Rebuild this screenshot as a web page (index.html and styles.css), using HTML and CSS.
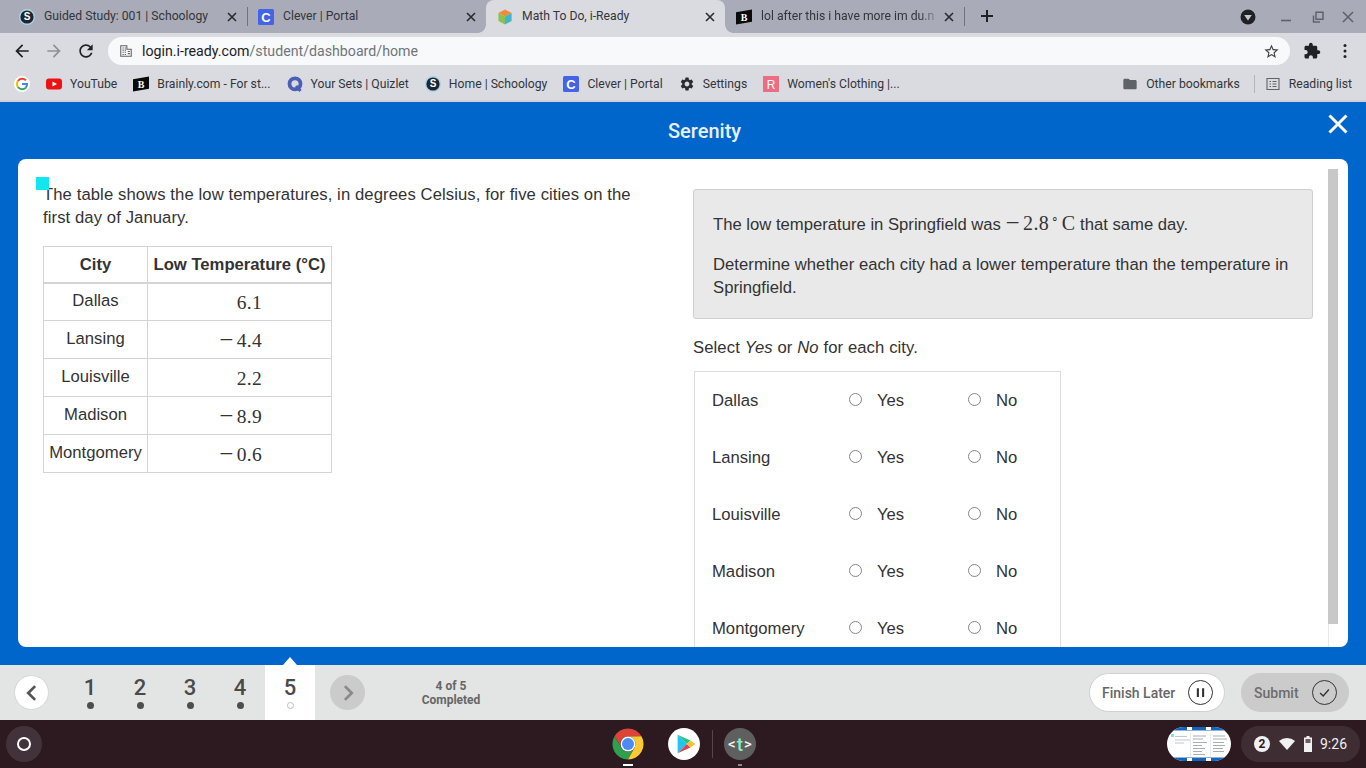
FILE: index.html
```html
<!DOCTYPE html>
<html lang="en">
<head>
<meta charset="utf-8">
<title>Math To Do, i-Ready</title>
<link rel="stylesheet" href="styles.css">
</head>
<body>
<header class="tabstrip">
  <div class="tab">
    <svg class="fav" viewBox="0 0 16 16"><circle cx="8" cy="8" r="8" fill="#a9d3e4"/><circle cx="8" cy="8" r="6.600" fill="#1c2530"/><text x="8" y="11.400" text-anchor="middle" class="glyph-s">S</text></svg>
    <span class="tab-title">Guided Study: 001 | Schoology</span>
    <svg class="tab-x" viewBox="0 0 16 16"><path d="M4 4l8 8M12 4l-8 8"/></svg>
    <i class="tab-sep"></i>
  </div>
  <div class="tab">
    <svg class="fav" viewBox="0 0 16 16"><rect width="16" height="16" rx="1.500" fill="#4563e6"/><text x="8" y="12.700" text-anchor="middle" class="glyph-c">C</text></svg>
    <span class="tab-title">Clever | Portal</span>
    <svg class="tab-x" viewBox="0 0 16 16"><path d="M4 4l8 8M12 4l-8 8"/></svg>
  </div>
  <div class="tab tab-active">
    <svg class="fav" viewBox="0 0 16 16">
      <path d="M8 .5l6.600 3.500L8 7.600 1.400 4z" fill="#f08c38"/>
      <path d="M1.400 4L8 7.600v8L1.400 12z" fill="#8cc152"/>
      <path d="M14.600 4L8 7.600v8l6.600-3.600z" fill="#3fb6c9"/>
    </svg>
    <span class="tab-title">Math To Do, i-Ready</span>
    <svg class="tab-x" viewBox="0 0 16 16"><path d="M4 4l8 8M12 4l-8 8"/></svg>
  </div>
  <div class="tab">
    <svg class="fav" viewBox="0 0 16 16"><path d="M0 3.200L16 .5v12.300L0 15.500z" fill="#0a0a0a"/><text x="8" y="11.800" text-anchor="middle" class="glyph-b">B</text></svg>
    <span class="tab-title tab-fade">lol after this i have more im du.n</span>
    <svg class="tab-x" viewBox="0 0 16 16"><path d="M4 4l8 8M12 4l-8 8"/></svg>
    <i class="tab-sep"></i>
  </div>
  <svg class="newtab" viewBox="0 0 16 16"><path d="M8 2v12M2 8h12" fill="none" stroke="#202124" stroke-width="2"/></svg>
  <div class="win-controls">
    <svg class="profile" viewBox="0 0 16 16"><circle cx="8" cy="8" r="7.500" fill="#202124"/><path d="M4.200 6h7.600L8 11.400z" fill="#c5c7cf"/></svg>
    <svg class="win-btn" viewBox="0 0 16 16"><path d="M3 11.500h10" stroke="#5f6368" stroke-width="1.600" fill="none"/></svg>
    <svg class="win-btn" viewBox="0 0 16 16"><path d="M3.500 6.500v6.500h6.500M6 3.200h7v7H6z" stroke="#5f6368" stroke-width="1.500" fill="none"/></svg>
    <svg class="win-btn win-btn-last" viewBox="0 0 16 16"><path d="M3 3l10 10M13 3L3 13" stroke="#5f6368" stroke-width="1.600" fill="none"/></svg>
  </div>
</header>

<nav class="toolbar">
  <svg class="tool" viewBox="0 0 24 24"><path fill="#202124" d="M20 11H7.830l5.590-5.590L12 4l-8 8 8 8 1.410-1.410L7.830 13H20v-2z"/></svg>
  <svg class="tool" viewBox="0 0 24 24"><path fill="#8f9196" d="M4 11h12.170l-5.590-5.590L12 4l8 8-8 8-1.410-1.410L16.170 13H4v-2z"/></svg>
  <svg class="tool" viewBox="0 0 24 24"><path fill="#202124" d="M17.650 6.350C16.200 4.900 14.210 4 12 4c-4.420 0-7.990 3.580-7.990 8s3.570 8 7.990 8c3.730 0 6.840-2.550 7.730-6h-2.080c-.82 2.330-3.040 4-5.650 4-3.310 0-6-2.690-6-6s2.690-6 6-6c1.660 0 3.140.69 4.220 1.780L13 11h7V4l-2.350 2.350z"/></svg>
  <div class="omnibox">
    <svg class="site-icon" viewBox="0 0 16 16"><path d="M2 2h7v4h5v8H2z M4 4.500h1.500M6.500 4.500H8M4 7h1.500M6.500 7H8M4 9.500h1.500M6.500 9.500H8M10 8.500h2.500M10 11h2.500M4 12h1.500M6.500 12H8" fill="none" stroke="#5f6368" stroke-width="1.200"/></svg>
    <span class="url"><span class="url-host">login.i-ready.com</span>/student/dashboard/home</span>
    <svg class="star" viewBox="0 0 24 24"><path fill="#444" d="M22 9.240l-7.190-.62L12 2 9.190 8.630 2 9.240l5.460 4.730L5.820 21 12 17.270 18.180 21l-1.630-7.030L22 9.240zM12 15.400l-3.760 2.270 1-4.280-3.320-2.880 4.380-.38L12 6.100l1.710 4.040 4.380.38-3.320 2.880 1 4.280L12 15.400z"/></svg>
  </div>
  <svg class="ext" viewBox="0 0 24 24"><path fill="#202124" d="M20.500 11H19V7c0-1.100-.9-2-2-2h-4V3.500C13 2.120 11.880 1 10.500 1S8 2.120 8 3.500V5H4c-1.100 0-1.990.9-1.990 2v3.800H3.500c1.490 0 2.700 1.210 2.700 2.700s-1.210 2.700-2.700 2.700H2V20c0 1.100.9 2 2 2h3.800v-1.500c0-1.490 1.210-2.700 2.700-2.700 1.490 0 2.700 1.210 2.700 2.700V22H17c1.100 0 2-.9 2-2v-4h1.500c1.380 0 2.500-1.120 2.500-2.500S21.880 11 20.500 11z"/></svg>
  <svg class="menu" viewBox="0 0 16 16"><circle cx="8" cy="2.500" r="1.500" fill="#202124"/><circle cx="8" cy="8" r="1.500" fill="#202124"/><circle cx="8" cy="13.500" r="1.500" fill="#202124"/></svg>
</nav>

<nav class="bookmarks">
  <div class="bm">
    <svg class="fav" viewBox="0 0 16 16">
      <circle cx="8" cy="8" r="8" fill="#fff"/>
      <path d="M12 4.400A5.200 5.200 0 0 0 3.900 5" fill="none" stroke="#ea4335" stroke-width="2"/>
      <path d="M3.900 5a5.200 5.200 0 0 0 0 6" fill="none" stroke="#fbbc05" stroke-width="2"/>
      <path d="M3.900 11a5.200 5.200 0 0 0 8 .6" fill="none" stroke="#34a853" stroke-width="2"/>
      <path d="M8 8h5a5.200 5.200 0 0 1-1.200 3.700" fill="none" stroke="#4285f4" stroke-width="2"/>
    </svg>
  </div>
  <div class="bm">
    <svg class="fav" viewBox="0 0 16 16"><rect y="2.500" width="16" height="11" rx="3" fill="#ee1111"/><path d="M6.500 5.500v5L11 8z" fill="#fff"/></svg>
    <span>YouTube</span>
  </div>
  <div class="bm"><svg class="fav" viewBox="0 0 16 16"><path d="M0 3.200L16 .5v12.300L0 15.500z" fill="#0a0a0a"/><text x="8" y="11.800" text-anchor="middle" class="glyph-b">B</text></svg><span>Brainly.com - For st...</span></div>
  <div class="bm">
    <svg class="fav" viewBox="0 0 16 16"><circle cx="8" cy="7.800" r="5.500" fill="none" stroke="#4a5fb5" stroke-width="3.800"/><path d="M9 10l4.500 5" stroke="#4a5fb5" stroke-width="3"/></svg>
    <span>Your Sets | Quizlet</span>
  </div>
  <div class="bm"><svg class="fav" viewBox="0 0 16 16"><circle cx="8" cy="8" r="8" fill="#a9d3e4"/><circle cx="8" cy="8" r="6.600" fill="#1c2530"/><text x="8" y="11.400" text-anchor="middle" class="glyph-s">S</text></svg><span>Home | Schoology</span></div>
  <div class="bm"><svg class="fav" viewBox="0 0 16 16"><rect width="16" height="16" rx="1.500" fill="#4563e6"/><text x="8" y="12.700" text-anchor="middle" class="glyph-c">C</text></svg><span>Clever | Portal</span></div>
  <div class="bm"><svg class="fav gear" viewBox="0 0 24 24"><path fill="currentColor" d="M19.140 12.940c.04-.3.06-.61.06-.94 0-.32-.02-.64-.07-.94l2.030-1.580c.18-.14.23-.41.12-.61l-1.920-3.320c-.12-.22-.37-.29-.59-.22l-2.390.96c-.5-.38-1.030-.7-1.620-.94l-.36-2.540c-.04-.24-.24-.41-.48-.41h-3.840c-.24 0-.43.17-.47.41l-.36 2.540c-.59.24-1.130.57-1.620.94l-2.390-.96c-.22-.08-.47 0-.59.22L2.740 8.870c-.12.21-.08.47.12.61l2.030 1.580c-.05.3-.09.63-.09.94s.02.64.07.94l-2.030 1.580c-.18.14-.23.41-.12.61l1.920 3.320c.12.22.37.29.59.22l2.390-.96c.5.38 1.030.7 1.620.94l.36 2.54c.05.24.24.41.48.41h3.840c.24 0 .44-.17.47-.41l.36-2.54c.59-.24 1.130-.56 1.620-.94l2.390.96c.22.08.47 0 .59-.22l1.920-3.320c.12-.22.07-.47-.12-.61l-2.010-1.580zM12 15.600c-1.980 0-3.600-1.620-3.600-3.600s1.620-3.600 3.600-3.600 3.600 1.620 3.600 3.600-1.620 3.600-3.600 3.600z"/></svg><span>Settings</span></div>
  <div class="bm">
    <svg class="fav" viewBox="0 0 16 16"><rect width="16" height="16" fill="#ea6d84"/><text x="8" y="12.500" text-anchor="middle" class="glyph-r">R</text></svg>
    <span>Women's Clothing |...</span>
  </div>
  <div class="bm bm-right">
    <svg class="fav" viewBox="0 0 24 24"><path fill="#5f6368" d="M10 4H4c-1.100 0-1.990.9-1.990 2L2 18c0 1.100.9 2 2 2h16c1.100 0 2-.9 2-2V8c0-1.100-.9-2-2-2h-8l-2-2z"/></svg>
    <span>Other bookmarks</span>
  </div>
  <i class="bm-sep"></i>
  <div class="bm">
    <svg class="fav" viewBox="0 0 16 16"><path d="M2 2.500h12v11H2zM4.500 5.500h1.500M7.500 5.500h4M4.500 8h1.500M7.500 8h4M4.500 10.500h1.500M7.500 10.500h4" fill="none" stroke="#5f6368" stroke-width="1.100"/></svg>
    <span>Reading list</span>
  </div>
</nav>

<main class="stage">
  <div class="stage-head">
    <h1 class="student">Serenity</h1>
    <svg class="stage-close" viewBox="0 0 20 20"><path d="M1.500 1.500l17 17M18.500 1.500l-17 17" fill="none" stroke="#fff" stroke-width="3"/></svg>
  </div>
  <section class="card">
    <div class="pane">
      <div class="col-left">
        <i class="marker"></i>
        <p class="para para-intro">The table shows the low temperatures, in degrees Celsius, for five cities on the first day of January.</p>
        <table class="data">
          <thead><tr><th class="c-city">City</th><th class="c-temp">Low Temperature (°C)</th></tr></thead>
          <tbody>
            <tr><td>Dallas</td><td class="num">6.1</td></tr>
            <tr><td>Lansing</td><td class="num"><span class="minus">−</span>4.4</td></tr>
            <tr><td>Louisville</td><td class="num">2.2</td></tr>
            <tr><td>Madison</td><td class="num"><span class="minus">−</span>8.9</td></tr>
            <tr><td>Montgomery</td><td class="num"><span class="minus">−</span>0.6</td></tr>
          </tbody>
        </table>
      </div>
      <div class="col-right">
        <div class="prompt">
          <p class="para">The low temperature in Springfield was <span class="math"><span class="minus">−</span>2.8<sup class="deg">∘</sup>C</span> that same day.</p>
          <p class="para para-gap">Determine whether each city had a lower temperature than the temperature in Springfield.</p>
        </div>
        <p class="para select">Select <em>Yes</em> or <em>No</em> for each city.</p>
        <div class="choices">
          <div class="choice"><span>Dallas</span><label class="opt"><input type="radio" name="r1">Yes</label><label class="opt"><input type="radio" name="r1">No</label></div>
          <div class="choice"><span>Lansing</span><label class="opt"><input type="radio" name="r2">Yes</label><label class="opt"><input type="radio" name="r2">No</label></div>
          <div class="choice"><span>Louisville</span><label class="opt"><input type="radio" name="r3">Yes</label><label class="opt"><input type="radio" name="r3">No</label></div>
          <div class="choice"><span>Madison</span><label class="opt"><input type="radio" name="r4">Yes</label><label class="opt"><input type="radio" name="r4">No</label></div>
          <div class="choice"><span>Montgomery</span><label class="opt"><input type="radio" name="r5">Yes</label><label class="opt"><input type="radio" name="r5">No</label></div>
        </div>
      </div>
    </div>
    <div class="scroll"><div class="thumb"></div></div>
  </section>
</main>

<footer class="quizbar">
  <div class="round round-back"><svg viewBox="0 0 16 16"><path d="M10.500 2.500L5 8l5.500 5.500" fill="none" stroke="#555" stroke-width="2.200"/></svg></div>
  <div class="steps">
    <div class="step"><b>1</b><i class="dot"></i></div>
    <div class="step"><b>2</b><i class="dot"></i></div>
    <div class="step"><b>3</b><i class="dot"></i></div>
    <div class="step"><b>4</b><i class="dot"></i></div>
    <div class="step step-current"><b>5</b><i class="dot dot-open"></i></div>
  </div>
  <div class="round round-next"><svg viewBox="0 0 16 16"><path d="M5.500 2.500L11 8l-5.500 5.500" fill="none" stroke="#8a8a8a" stroke-width="2.200"/></svg></div>
  <div class="progress">4 of 5<br>Completed</div>
  <div class="pill pill-later">Finish Later<span class="pill-icon"><svg viewBox="0 0 24 24"><path d="M9 7v10M15 7v10" stroke="#333" stroke-width="2.400" fill="none"/></svg></span></div>
  <div class="pill pill-submit">Submit<span class="pill-icon"><svg viewBox="0 0 24 24"><path d="M7 12.500l3.500 3.500L17 8.500" stroke="#333" stroke-width="1.600" fill="none"/></svg></span></div>
</footer>

<footer class="shelf">
  <div class="launcher"><i class="ring"></i></div>
  <div class="apps">
    <div class="app">
      <svg class="app-icon" viewBox="0 0 48 48">
        <path d="M43.050 13A22 22 0 0 0 4.950 13L14.500 29A10.500 10.500 0 0 1 24 13.500Z" fill="#db4437"/>
        <path d="M4.950 13A22 22 0 0 0 24 46L33.500 28.500A10.500 10.500 0 0 1 14.500 29Z" fill="#2f9e4f"/>
        <path d="M24 46A22 22 0 0 0 43.050 13L24 13.500A10.500 10.500 0 0 1 33.500 28.500Z" fill="#fcc934"/>
        <circle cx="24" cy="24" r="10.500" fill="#fff"/><circle cx="24" cy="24" r="8.500" fill="#4c8bf5"/>
      </svg>
      <i class="run run-wide"></i>
    </div>
    <div class="app">
      <svg class="app-icon" viewBox="0 0 48 48">
        <circle cx="24" cy="24" r="22.500" fill="#fff"/>
        <path d="M15 11v26l13-13z" fill="#22c5f0"/>
        <path d="M15 11l13 13 5-5z" fill="#27c28a"/>
        <path d="M15 37l13-13 5 5z" fill="#e2404f"/>
        <path d="M33 19l-5 5 5 5 7-5z" fill="#fbc02d"/>
      </svg>
    </div>
    <i class="app-sep"></i>
    <div class="app">
      <div class="app-t"><span>&lt;</span><b>t</b><span>&gt;</span></div>
      <i class="run"></i>
    </div>
  </div>
  <svg class="windows" viewBox="0 0 64 34">
    <defs><clipPath id="pill-clip"><rect width="64" height="34" rx="17"/></clipPath></defs>
    <g clip-path="url(#pill-clip)">
      <rect width="64" height="34" fill="#fff"/>
      <path d="M6 1.500h14M25 1.500h14M44 1.500h14M6 32.500h14M25 32.500h14M44 32.500h14" stroke="#1466bd" stroke-width="3"/>
      <path d="M0 3.500h64M0 30.500h64" stroke="#8fb4dc" stroke-width="1"/>
      <rect x="4" y="7" width="3" height="3" fill="#7fe3ea"/>
      <path d="M8 9.500h12M8 13h15M8 16h9" stroke="#b4b8bd" stroke-width=".8"/>
      <path d="M23.500 6v24M43.500 6v24" stroke="#e2e4e6" stroke-width=".7"/>
      <path d="M26 9h13M26 12h10M26 15.500h14M26 18.500h9M26 21.500h12M26 24.500h9M26 27.500h12M46 9h12M46 12h14M46 15.500h11M46 18.500h12M46 21.500h10M46 24.500h11" stroke="#92989e" stroke-width=".8"/>
    </g>
  </svg>
  <div class="tray">
    <span class="badge">2</span>
    <svg class="tray-wifi" viewBox="0 0 16 16"><path d="M0 5a12 12 0 0 1 16 0L8 14z" fill="#f1f1f1"/></svg>
    <svg class="tray-bat" viewBox="0 0 10 16"><path d="M3.500 0h3v1.500H9V16H1V1.500h2.500z" fill="#f1f1f1"/><rect x="2.500" y="3" width="5" height="4" fill="#6a5e62"/></svg>
    <span class="clock">9:26</span>
  </div>
</footer>
</body>
</html>
```

FILE: styles.css
```css
* { box-sizing: border-box; }
html, body { margin: 0; padding: 0; }
body {
  width: 1366px;
  height: 768px;
  overflow: hidden;
  display: flex;
  flex-direction: column;
  font-family: Roboto, "Liberation Sans", sans-serif;
  background: #0066cc;
}
i { display: block; font-style: normal; }
.glyph-s { font: 700 10px "Liberation Sans", sans-serif; fill: #fff; }
.glyph-c { font: 700 13px "Liberation Sans", sans-serif; fill: #fff; }
.glyph-b { font: 900 10px "Liberation Serif", serif; fill: #fff; }
.glyph-r { font: 400 12px "Liberation Sans", sans-serif; fill: #fff; }

/* tab strip */
.tabstrip {
  height: 33px;
  flex: none;
  display: flex;
  align-items: stretch;
  padding-left: 8px;
  background: #a9acb8;
  color: #33353a;
  font-size: 12.2px;
}
.tab {
  width: 239px;
  flex: none;
  display: flex;
  align-items: center;
  padding: 0 7px 0 11px;
  position: relative;
}
.tab-active {
  background: #dadbe0;
  border-radius: 8px 8px 0 0;
}
.tab-active::before,
.tab-active::after {
  content: "";
  position: absolute;
  bottom: 0;
  width: 8px;
  height: 8px;
}
.tab-active::before { left: -8px; background: radial-gradient(circle at 0 0, transparent 7.5px, #dadbe0 8px); }
.tab-active::after { right: -8px; background: radial-gradient(circle at 100% 0, transparent 7.5px, #dadbe0 8px); }
.fav { width: 16px; height: 16px; flex: none; }
.tab-title {
  margin: -1px 0 0 9px;
  flex: 1;
  min-width: 0;
  white-space: nowrap;
  overflow: hidden;
}
.tab-fade {
  -webkit-mask-image: linear-gradient(90deg, #000 88%, transparent 100%);
  mask-image: linear-gradient(90deg, #000 88%, transparent 100%);
}
.tab-x { width: 16px; height: 16px; flex: none; fill: none; stroke: #2a2a2e; stroke-width: 1.6; position: relative; z-index: 1; }
.tab-sep {
  position: absolute;
  right: -1px;
  top: 7px;
  width: 1px;
  height: 19px;
  background: #6f717b;
}
.newtab { width: 16px; height: 16px; margin: 8px 0 0 15px; flex: none; }
.win-controls { margin-left: auto; display: flex; align-items: center; }
.profile { width: 16px; height: 16px; margin-right: 22px; }
.win-btn { width: 16px; height: 16px; margin-right: 16px; }
.win-btn-last { margin-right: 10px; margin-left: -2px; }

/* toolbar */
.toolbar {
  height: 36px;
  flex: none;
  display: flex;
  align-items: center;
  background: #dadbe0;
  padding-left: 12px;
}
.tool { width: 20px; height: 20px; flex: none; margin-right: 12px; }
.omnibox {
  width: 1182px;
  height: 28px;
  flex: none;
  display: flex;
  align-items: center;
  padding: 0 10px 0 11px;
  background: #f8f9fb;
  border-radius: 14px;
  font-size: 14.2px;
  color: #70757a;
}
.site-icon { width: 14px; height: 14px; flex: none; }
.url { margin-left: 9px; }
.url-host { color: #202124; }
.star { width: 17px; height: 17px; margin-left: auto; }
.ext { width: 18px; height: 18px; margin-left: 13px; flex: none; }
.menu { width: 16px; height: 16px; margin-left: 16px; flex: none; }

/* bookmarks */
.bookmarks {
  height: 33px;
  flex: none;
  display: flex;
  align-items: center;
  padding: 0 6px 2px;
  background: #dadbe0;
  border-bottom: 2px solid #cfd0d5;
  font-size: 12.2px;
  color: #33353a;
}
.bm { display: flex; align-items: center; gap: 8px; padding: 0 8px; white-space: nowrap; }
.bm-right { margin-left: auto; }
.bm-sep { width: 1px; height: 18px; background: #b4b5ba; margin: 0 2px 0 6px; }
.gear { color: #2a2a2e; }

/* blue stage */
.stage {
  height: 563px;
  flex: none;
  background: #0066cc;
  padding: 0 18px 18px;
  display: flex;
  flex-direction: column;
}
.stage-head {
  height: 57px;
  flex: none;
  display: flex;
  padding-left: 650px;
}
.student {
  margin: 17px 0 0;
  font-size: 20px;
  line-height: 24px;
  font-weight: 500;
  color: #e8f0fa;
}
.stage-close { width: 20px; height: 20px; margin: 12px 0 0 auto; }
.card {
  flex: 1;
  min-height: 0;
  display: flex;
  background: #fff;
  border-radius: 8px;
  overflow: hidden;
  font-family: "Liberation Sans", Arial, sans-serif;
  color: #333;
}
.pane {
  flex: 1;
  min-width: 0;
  display: flex;
  gap: 25px;
  overflow: hidden;
  padding-left: 25px;
}
.col-left { width: 625px; flex: none; padding-top: 24px; position: relative; }
.col-right { width: 620px; flex: none; padding-top: 30px; }
.marker {
  position: absolute;
  left: -7px;
  top: 18px;
  width: 13px;
  height: 13px;
  background: #12e6ee;
}
.para { margin: 0; font-size: 16.67px; line-height: 23px; }
.para-intro { max-width: 600px; letter-spacing: 0.09px; }

/* table */
.data {
  margin-top: 17px;
  border-collapse: collapse;
  font-size: 16.67px;
}
.data th, .data td { border: 1px solid #d4d4d4; text-align: center; padding: 0; }
.data th { height: 36px; font-weight: 700; border-bottom-width: 2px; padding-top: 1px; }
.c-city { width: 104px; }
.c-temp { width: 184px; }
.data td { height: 38px; padding-bottom: 1px; }
.data td.num {
  text-align: right;
  padding: 2px 69px 0 0;
  font: 400 19.5px "Liberation Serif", serif;
  letter-spacing: 0.3px;
}
.minus { font-size: 25px; line-height: 0; vertical-align: -1px; margin-right: 3px; }

/* prompt */
.prompt {
  height: 130px;
  padding: 22px 19px 0;
  background: #e9e9e9;
  border: 1px solid #cfcfcf;
  border-radius: 3px;
}
.para-gap { margin-top: 17px; letter-spacing: 0.03px; }
.math { font: 400 20px "Liberation Serif", serif; letter-spacing: 0.4px; }
.deg { font-size: 12px; line-height: 0; vertical-align: 7px; margin: 0 2px; }
.select { margin-top: 17px; letter-spacing: 0.1px; }
.choices {
  width: 367px;
  margin: 12px 0 0 1px;
  border: 1px solid #dcdcdc;
  font-size: 16.67px;
}
.choice {
  height: 57px;
  display: grid;
  grid-template-columns: 137px 119px 1fr;
  align-items: center;
  padding-left: 17px;
}
.opt { display: flex; align-items: center; gap: 15px; }
.opt input {
  appearance: none;
  -webkit-appearance: none;
  margin: 0 0 2px;
  width: 13px;
  height: 13px;
  flex: none;
  border: 1px solid #858585;
  border-radius: 50%;
  background: #fff;
}

/* scrollbar */
.scroll {
  width: 10px;
  flex: none;
  margin: 10px 10px 0 0;
  background: linear-gradient(90deg, #e8e8e8 1px, transparent 1px);
}
.thumb { height: 455px; background: #c8c8c8; }

/* quiz bar */
.quizbar {
  height: 55px;
  flex: none;
  display: flex;
  align-items: center;
  padding: 0 17px 0 14px;
  background: #e3e4e4;
  color: #4a4a4a;
}
.round {
  width: 35px;
  height: 35px;
  border-radius: 50%;
  flex: none;
  display: flex;
  align-items: center;
  justify-content: center;
}
.round svg { width: 20px; height: 20px; }
.round-back { background: #fff; border: 1px solid #d6d6d6; }
.round-next { background: #cbcbcb; margin-left: 15px; }
.steps { display: flex; align-self: stretch; margin-left: 16px; }
.step {
  width: 50px;
  display: flex;
  flex-direction: column;
  align-items: center;
  padding-top: 10px;
  position: relative;
}
.step b { font-size: 22px; line-height: 26px; font-weight: 500; }
.dot { width: 7px; height: 7px; border-radius: 50%; background: #4d4d4d; margin-top: 1px; }
.dot-open { background: #fff; border: 1px solid #bdbdbd; }
.step-current { background: #fff; }
.step-current::before {
  content: "";
  position: absolute;
  left: 18px;
  top: -8px;
  border: 7px solid transparent;
  border-top-width: 0;
  border-bottom: 8px solid #fff;
}
.progress {
  width: 102px;
  margin-left: 35px;
  text-align: center;
  font-size: 12px;
  line-height: 14px;
  font-weight: 700;
  color: #666;
}
.pill {
  height: 39px;
  border-radius: 20px;
  display: flex;
  align-items: center;
  justify-content: space-between;
  font-size: 14px;
  font-weight: 500;
  flex: none;
}
.pill-later {
  margin-left: auto;
  width: 136px;
  padding: 0 11px 0 12px;
  background: #fff;
  border: 1px solid #d0d0d0;
  color: #666;
}
.pill-submit {
  width: 108px;
  margin-left: 16px;
  padding: 0 12px 0 13px;
  background: #cbcbcb;
  color: #6d6d6d;
}
.pill-icon {
  width: 25px;
  height: 25px;
  border: 1px solid #333;
  border-radius: 50%;
  display: flex;
  align-items: center;
  justify-content: center;
}
.pill-icon svg { width: 21px; height: 21px; }

/* shelf */
.shelf {
  height: 48px;
  flex: none;
  display: flex;
  align-items: center;
  background: #2d1a20;
  padding: 0 6px;
}
.launcher {
  width: 36px;
  height: 36px;
  border-radius: 50%;
  background: #42323a;
  display: flex;
  align-items: center;
  justify-content: center;
  flex: none;
}
.ring { width: 14px; height: 14px; border: 2px solid #fff; border-radius: 50%; }
.apps { display: flex; align-items: center; margin-left: 558px; height: 100%; }
.app {
  width: 56px;
  height: 100%;
  display: flex;
  align-items: center;
  justify-content: center;
  position: relative;
}
.app-icon { width: 34px; height: 34px; }
.run {
  position: absolute;
  bottom: 2px;
  left: 26px;
  width: 4px;
  height: 2px;
  background: #8f8689;
}
.run-wide { left: 23px; width: 10px; background: #fff; }
.app-sep { width: 1px; height: 28px; background: #55464b; margin-right: -1px; }
.app-t {
  width: 32px;
  height: 32px;
  border-radius: 50%;
  background: #5f5f5f;
  color: #f2f2f2;
  display: flex;
  align-items: center;
  justify-content: center;
  gap: 1px;
  font: 500 15px Roboto, sans-serif;
}
.app-t b { color: #86ecc0; font-size: 19px; font-weight: 500; }
.windows { width: 64px; height: 34px; margin-left: auto; flex: none; }
.tray {
  width: 119px;
  height: 36px;
  margin-left: 10px;
  flex: none;
  display: flex;
  align-items: center;
  padding-left: 13px;
  background: #3e2e33;
  border-radius: 18px;
  color: #f1f1f1;
}
.badge {
  width: 16px;
  height: 16px;
  border-radius: 50%;
  background: #f1f1f1;
  color: #2d1a20;
  font-size: 12px;
  font-weight: 700;
  line-height: 16px;
  text-align: center;
}
.tray-wifi { width: 16px; height: 16px; margin-left: 9px; }
.tray-bat { width: 10px; height: 16px; margin-left: 8px; }
.clock { font-size: 14px; margin-left: 7px; }
```
